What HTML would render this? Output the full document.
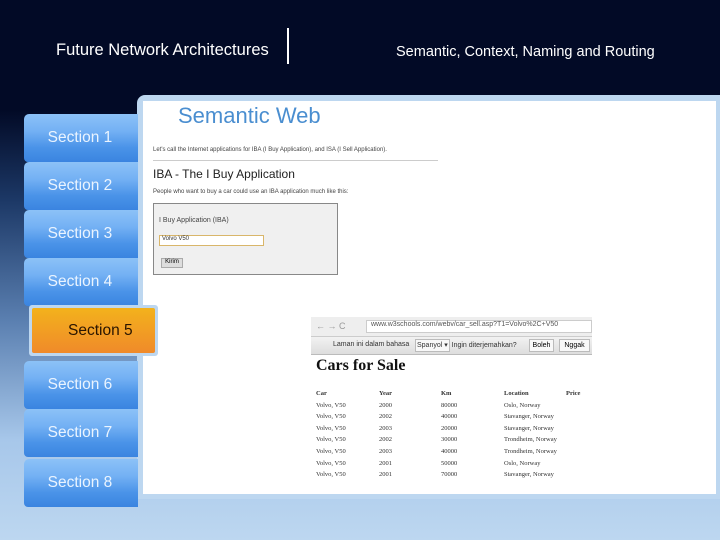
<!DOCTYPE html>
<html><head><meta charset="utf-8"><style>
*{margin:0;padding:0;box-sizing:border-box}
body{width:720px;height:540px;overflow:hidden;position:relative;font-family:"Liberation Sans",sans-serif;
background:linear-gradient(180deg,#020a26 0px,#020a26 110px,#1c3866 200px,#5a7fb0 320px,#a7c7ea 440px,#bdd7f0 540px)}
.abs{position:absolute}
.hdr{color:#fff;white-space:nowrap}
.tab{position:absolute;left:24px;width:114px;height:48px;border-radius:5px 0 0 4px;
background:linear-gradient(180deg,#8cc2f7 0%,#74b1f4 35%,#4a93e8 70%,#3a84e0 100%);
color:#eaf4ff;font-size:15.5px;text-align:center;line-height:48px;padding-right:2px}
.panel{left:137px;top:95px;width:583px;height:404px;background:#bdd7f0;border-radius:8px 0 0 0}
.inner{left:143px;top:101px;width:573px;height:393px;background:#fff}
.t{position:absolute;font-size:6px;color:#444;white-space:nowrap}
</style></head><body>
<div class="abs hdr" style="left:56px;top:41px;font-size:16.5px">Future Network Architectures</div>
<div class="abs" style="left:287px;top:28px;width:2px;height:36px;background:#fff"></div>
<div class="abs hdr" style="left:396px;top:44px;font-size:14.5px">Semantic, Context, Naming and Routing</div>

<div class="abs panel"></div>
<div class="abs inner"></div>
<div class="abs" style="left:178px;top:103px;font-size:22px;color:#4a8ed0">Semantic Web</div>

<div class="t" style="left:153px;top:147px">Let's call the Internet applications for IBA (I Buy Application), and ISA (I Sell Application).</div>
<div class="abs" style="left:153px;top:160px;width:285px;height:1px;background:#ccc"></div>
<div class="abs" style="left:153px;top:167px;font-size:12px;color:#222">IBA - The I Buy Application</div>
<div class="t" style="left:153px;top:189px">People who want to buy a car could use an IBA application much like this:</div>
<div class="abs" style="left:153px;top:203px;width:185px;height:72px;background:#f0f0f0;border:1px solid #888"></div>
<div class="t" style="left:159px;top:217px;font-size:7px">I Buy Application (IBA)</div>
<div class="abs" style="left:159px;top:235px;width:105px;height:11px;background:#fff;border:1px solid #d9b66a;font-size:6px;padding-left:2px;color:#333">Volvo V50</div>
<div class="abs" style="left:161px;top:258px;width:22px;height:10px;background:#ddd;border:1px solid #aaa;font-size:6px;text-align:center">Kirim</div>

<div class="abs" style="left:311px;top:317px;width:281px;height:20px;background:#eee;border-bottom:1px solid #ccc"></div>
<div class="abs" style="left:366px;top:320px;width:226px;height:13px;background:#fff;border:1px solid #ccc;font-size:7px;color:#555;padding-left:4px">www.w3schools.com/webv/car_sell.asp?T1=Volvo%2C+V50</div>
<div class="t" style="left:316px;top:321px;font-size:9px;color:#999">← → C</div>
<div class="abs" style="left:311px;top:337px;width:281px;height:18px;background:linear-gradient(#f2f2f2,#ddd);border-bottom:1px solid #bbb"></div>
<div class="t" style="left:333px;top:341px;font-size:7px;color:#333">Laman ini dalam bahasa</div>
<div class="abs" style="left:415px;top:339px;width:35px;height:13px;border:1px solid #bbb;background:#f8f8f8"></div>
<div class="t" style="left:417px;top:341px;font-size:7px;color:#333">Spanyol ▾&nbsp; Ingin diterjemahkan?</div>
<div class="abs" style="left:529px;top:339px;width:25px;height:13px;border:1px solid #bbb;background:#f8f8f8;font-size:7px;text-align:center;line-height:12px">Boleh</div>
<div class="abs" style="left:559px;top:339px;width:31px;height:13px;border:1px solid #bbb;background:#f8f8f8;font-size:7px;text-align:center;line-height:12px">Nggak</div>
<div class="abs" style="left:316px;top:357px;font-family:'Liberation Serif',serif;font-weight:bold;font-size:16px;color:#111">Cars for Sale</div>
<div class="abs" style="left:316px;top:388px;font-family:'Liberation Serif',serif;font-size:6.5px;color:#333;line-height:11.6px">
<table style="border-collapse:collapse"><tr style="font-weight:bold"><td style="width:63px">Car</td><td style="width:62px">Year</td><td style="width:63px">Km</td><td style="width:62px">Location</td><td>Price</td></tr>
<tr><td>Volvo, V50</td><td>2000</td><td>80000</td><td>Oslo, Norway</td></tr>
<tr><td>Volvo, V50</td><td>2002</td><td>40000</td><td>Stavanger, Norway</td></tr>
<tr><td>Volvo, V50</td><td>2003</td><td>20000</td><td>Stavanger, Norway</td></tr>
<tr><td>Volvo, V50</td><td>2002</td><td>30000</td><td>Trondheim, Norway</td></tr>
<tr><td>Volvo, V50</td><td>2003</td><td>40000</td><td>Trondheim, Norway</td></tr>
<tr><td>Volvo, V50</td><td>2001</td><td>50000</td><td>Oslo, Norway</td></tr>
<tr><td>Volvo, V50</td><td>2001</td><td>70000</td><td>Stavanger, Norway</td></tr></table></div>

<div class="tab" style="top:114px">Section 1</div>
<div class="tab" style="top:162px">Section 2</div>
<div class="tab" style="top:210px">Section 3</div>
<div class="tab" style="top:258px">Section 4</div>
<div class="abs" style="left:29px;top:305px;width:129px;height:51px;background:#bdd7f0;border-radius:3px"></div>
<div class="abs" style="left:32px;top:308px;width:123px;height:45px;background:linear-gradient(180deg,#f3b21c,#f08a2a);border-radius:2px;color:#2a1500;font-size:15.5px;line-height:45px;padding-left:36px">Section 5</div>
<div class="tab" style="top:361px">Section 6</div>
<div class="tab" style="top:409px">Section 7</div>
<div class="tab" style="top:459px">Section 8</div>
</body></html>
